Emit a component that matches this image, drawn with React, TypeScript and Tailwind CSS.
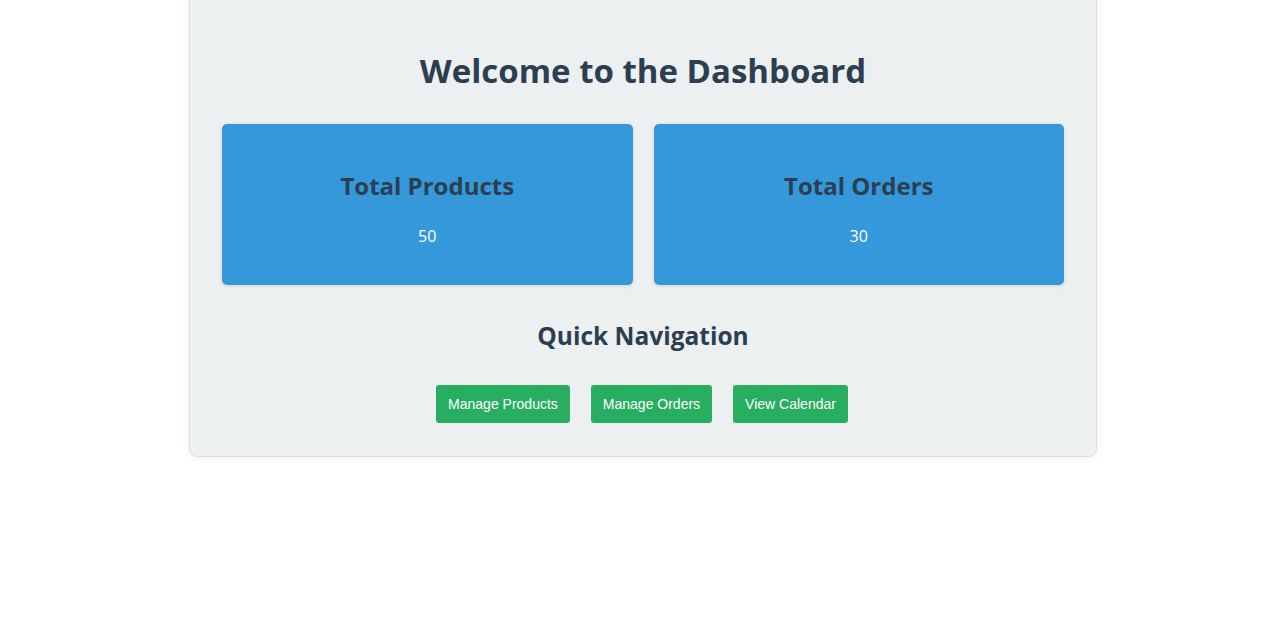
export default function App() {
  const buttons = ["Manage Products", "Manage Orders", "View Calendar"];

  return (
    <div className="min-h-screen bg-white pl-[6px] font-['Open_Sans',sans-serif]">
      <div className="mx-auto -mt-2 w-[908px] rounded-lg border border-[#dcdfe1] bg-[#ecf0f1] px-8 pb-[33px] pt-[55px] shadow-[0_0_8px_rgba(0,0,0,0.08)]">
        <h1 className="text-center text-[33px] font-bold leading-[46px] text-[#2c3e50]">
          Welcome to the Dashboard
        </h1>

        <div className="mt-[30px] grid grid-cols-2 gap-[21px]">
          <StatCard title="Total Products" value="50" />
          <StatCard title="Total Orders" value="30" />
        </div>

        <h2 className="mt-[35px] text-center text-[24.5px] font-bold leading-8 text-[#2c3e50]">
          Quick Navigation
        </h2>

        <div className="mt-[33px] flex justify-center gap-[21px] pr-[2px]">
          {buttons.map((b) => (
            <button
              key={b}
              className="rounded-[3px] bg-[#27ae60] px-3 py-[11px] font-['Liberation_Sans',Arial,sans-serif] text-[14px] leading-4 text-white"
            >
              {b}
            </button>
          ))}
        </div>
      </div>
    </div>
  );
}

function StatCard({ title, value }: { title: string; value: string }) {
  return (
    <div className="flex h-[161px] flex-col items-center rounded-[5px] bg-[#3498db] pt-[46px] shadow-[0_1px_4px_rgba(0,0,0,0.12)]">
      <h3 className="text-[24px] font-bold leading-8 text-[#2c3e50]">{title}</h3>
      <p className="mt-[22px] text-[16px] leading-6 text-white">{value}</p>
    </div>
  );
}
